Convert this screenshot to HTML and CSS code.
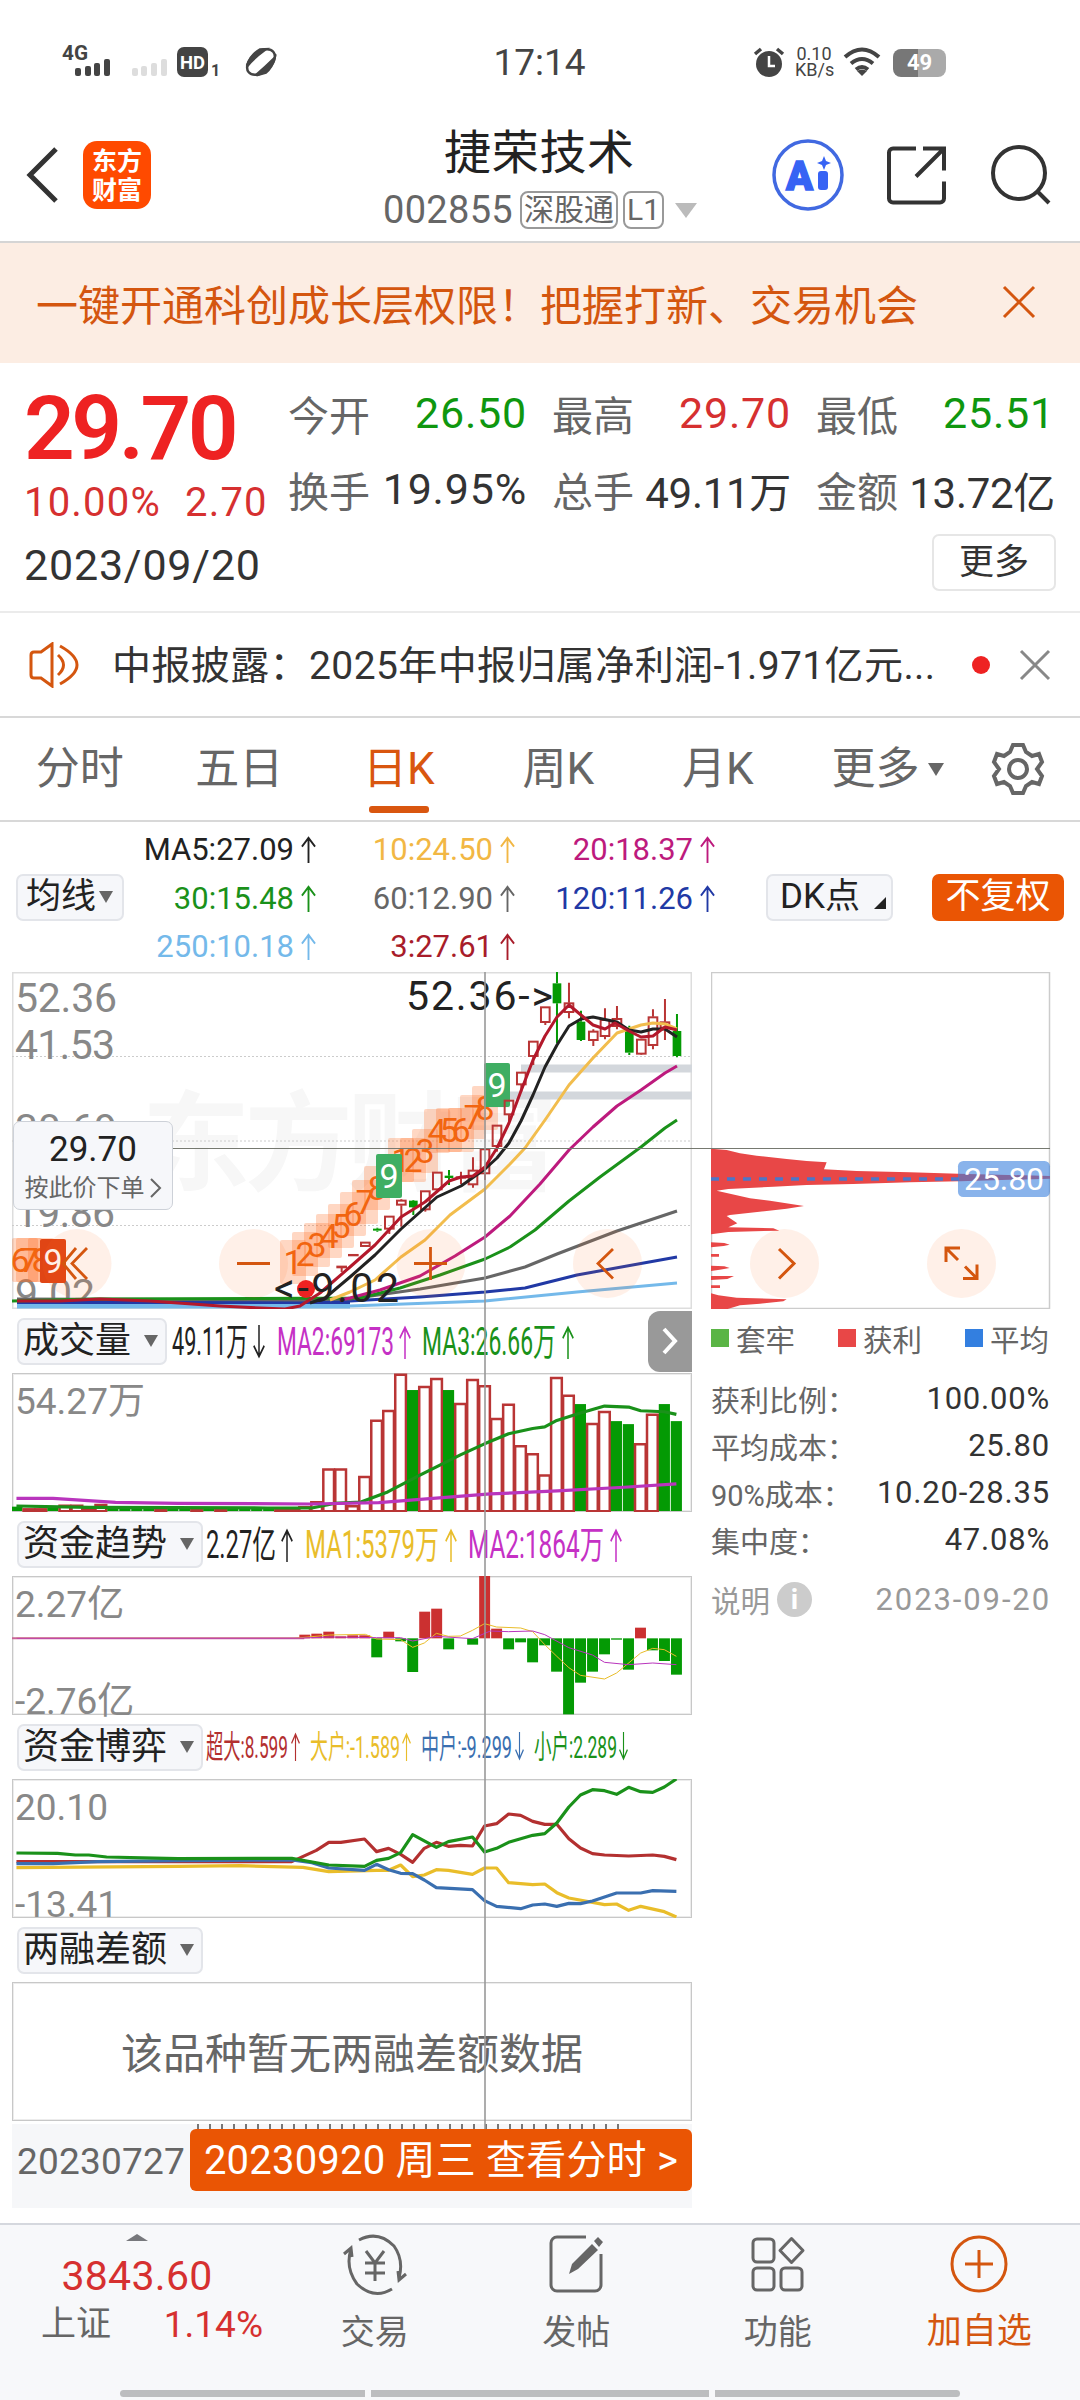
FILE: index.html
```
<!DOCTYPE html>
<html lang="zh-CN">
<head>
	<meta charset="UTF-8">
	<title>捷荣技术 002855</title>
	<link rel="stylesheet" href="styles.css">
</head>
<body>
	<svg width="0" height="0" class="defs">
		<symbol id="up" viewBox="0 0 16 28" preserveAspectRatio="none"><path d="M8 28V2M1 11L8 2l7 9" fill="none" stroke="currentColor" stroke-width="2"/></symbol>
		<symbol id="down" viewBox="0 0 16 28" preserveAspectRatio="none"><path d="M8 0v26M1 17l7 9 7-9" fill="none" stroke="currentColor" stroke-width="2"/></symbol>
	</svg>

	<!-- 状态栏 -->
	<div class="status">
		<div class="st-left">
			<svg width="220" height="40" viewBox="60 42 220 40">
				<text x="62" y="60" font-size="20" font-weight="700" textLength="26" lengthAdjust="spacingAndGlyphs" fill="#444">4G</text>
				<g fill="#444"><rect x="75" y="68" width="6" height="8" rx="2"/><rect x="85" y="66" width="6" height="10" rx="2"/><rect x="94" y="63" width="6" height="13" rx="2"/><rect x="104" y="59" width="6" height="17" rx="2"/></g>
				<g fill="#ddd"><rect x="132" y="68" width="6" height="8" rx="2"/><rect x="141" y="66" width="6" height="10" rx="2"/><rect x="151" y="63" width="6" height="13" rx="2"/><rect x="161" y="59" width="6" height="17" rx="2"/></g>
				<rect x="177" y="47" width="31" height="30" rx="7" fill="#444"/>
				<text x="180" y="69" font-size="18" font-weight="700" textLength="25" lengthAdjust="spacingAndGlyphs" fill="#fff">HD</text>
				<text x="211" y="76" font-size="16" font-weight="700" fill="#444">1</text>
				<g transform="rotate(-40 261 62)"><ellipse cx="261" cy="62" rx="16" ry="10" fill="none" stroke="#444" stroke-width="2.5"/><path d="M248 56Q258 50 268 52L272 55Q258 54 248 56ZM249 69Q262 69 273 68Q266 73 258 73Z" fill="#444" stroke="#444" stroke-width="3"/></g>
			</svg>
		</div>
		<div class="st-time">17:14</div>
		<div class="st-right">
			<svg width="32" height="32" viewBox="753 46 32 32"><circle cx="769" cy="64" r="13" fill="#444"/><path d="M755 54l6-5M783 54l-6-5" stroke="#444" stroke-width="3.5"/><path d="M769 56v10h6" fill="none" stroke="#fff" stroke-width="2.5"/></svg>
			<div class="speed">0.10<br>KB/s</div>
			<svg width="38" height="30" viewBox="0 0 38 30"><g fill="none" stroke="#444" stroke-width="4"><path d="M2 10q17-15 34 0"/><path d="M8 16.500q11-9 22 0"/><path d="M13 22.500q6-5 12 0"/></g><path d="M19 29l-5-5q5-3 10 0z" fill="#444"/></svg>
			<div class="battery">49</div>
		</div>
	</div>

	<!-- 顶部标题 -->
	<div class="header">
		<svg class="back" width="34" height="60" viewBox="0 0 34 60"><path d="M31 4L5 30l26 26" fill="none" stroke="#333" stroke-width="5"/></svg>
		<div class="logo">东方<br>财富</div>
		<div class="title">
			<h1>捷荣技术</h1>
			<div class="code"><span>002855</span><em>深股通</em><em>L1</em><i></i></div>
		</div>
		<svg class="h-icons" width="290" height="76" viewBox="765 137 290 76">
			<circle cx="808" cy="175" r="34" fill="none" stroke="#4169e1" stroke-width="3.500"/>
			<text x="786" y="190" font-size="41" font-weight="900" textLength="27" lengthAdjust="spacingAndGlyphs" fill="#3763f4" stroke="#3763f4" stroke-width="1.500">A</text>
			<rect x="818" y="171" width="10" height="19" rx="3" fill="#3763f4"/>
			<path d="M824 156l2 5 5 2-5 2-2 5-2-5-5-2 5-2z" fill="#3763f4"/>
			<path d="M916 148.500h-23a4 4 0 0 0-4 4v46a4 4 0 0 0 4 4h47a4 4 0 0 0 4-4v-17M923 148.500h21v22M944 148.500l-28 28" fill="none" stroke="#333" stroke-width="4"/>
			<circle cx="1019" cy="173" r="26" fill="none" stroke="#333" stroke-width="4"/>
			<path d="M1037 191l12 12" stroke="#333" stroke-width="4"/>
		</svg>
	</div>

	<div class="banner">
		<span>一键开通科创成长层权限！把握打新、交易机会</span>
		<svg width="34" height="34" viewBox="0 0 34 34"><path d="M2 2l30 30M32 2L2 32" stroke="#d4560f" stroke-width="3"/></svg>
	</div>

	<!-- 行情 -->
	<div class="quote">
		<div class="price">
			<b>29.70</b>
			<p><span>10.00%</span><span>2.70</span></p>
			<div class="date">2023/09/20</div>
		</div>
		<div class="quote-right">
			<ul class="stats">
				<li><label>今开</label><span class="green">26.50</span></li>
				<li><label>最高</label><span class="red">29.70</span></li>
				<li><label>最低</label><span class="green">25.51</span></li>
				<li><label>换手</label><span>19.95%</span></li>
				<li><label>总手</label><span class="cn">49.11万</span></li>
				<li><label>金额</label><span class="cn">13.72亿</span></li>
			</ul>
			<a class="more">更多</a>
		</div>
	</div>

	<div class="notice">
		<svg width="52" height="46" viewBox="0 0 52 46"><g fill="none" stroke="#d4560f" stroke-width="3"><path d="M2 13q0-3 3-3h7L23 2v42L12 36H5q-3 0-3-3z"/><path d="M29 13q11 10 0 20M31 4q34 19 0 38"/></g></svg>
		<span class="txt">中报披露：2025年中报归属净利润-1.971亿元...</span>
		<i class="dot"></i>
		<svg width="32" height="32" viewBox="0 0 32 32"><path d="M2 2l28 28M30 2L2 30" stroke="#888" stroke-width="3"/></svg>
	</div>

	<div class="tabs">
		<a>分时</a><a>五日</a><a class="on">日K</a><a>周K</a><a>月K</a><a class="tab-more">更多<i></i></a>
		<svg width="54" height="54" viewBox="-27 -27 54 54"><g fill="none" stroke="#666" stroke-width="4"><path d="M-5-24H5L8-17L14-13L21-15L24-7L19 0L24 7L21 15L14 13L8 17L5 24H-5L-8 17L-14 13L-21 15L-24 7L-19 0L-24-7L-21-15L-14-13L-8-17Z"/><circle r="9"/></g></svg>
	</div>

	<div class="ma">
		<a class="btn btn-ma">均线<i></i></a>
		<ul>
			<li class="c5">MA5:27.09<svg><use href="#up"/></svg></li>
			<li class="c10">10:24.50<svg><use href="#up"/></svg></li>
			<li class="c20">20:18.37<svg><use href="#up"/></svg></li>
			<li class="c30">30:15.48<svg><use href="#up"/></svg></li>
			<li class="c60">60:12.90<svg><use href="#up"/></svg></li>
			<li class="c120">120:11.26<svg><use href="#up"/></svg></li>
			<li class="c250">250:10.18<svg><use href="#up"/></svg></li>
			<li class="c3">3:27.61<svg><use href="#up"/></svg></li>
		</ul>
		<a class="btn btn-dk">DK点<i></i></a>
		<a class="btn btn-fq">不复权</a>
	</div>

	<div class="charts">
		<div class="col-main">
			<!-- K线 -->
			<svg class="kline" viewBox="12 972 680 337">
				<text x="142" y="1182" font-size="108" font-weight="700" fill="#f7f7f7" textLength="416">东方财富</text>
				<rect x="12.500" y="972.500" width="679" height="336" fill="none" stroke="#ddd" stroke-width="2"/>
				<path d="M12 1056.500H692M12 1141H692M12 1225.500H692" stroke="#ccc" stroke-dasharray="2 2"/>
				<path d="M521 1068.500H692M509 1095.500H692" stroke="#d3d7dc" stroke-width="8"/>
				<g font-size="41" fill="#888">
					<text x="15" y="1012" textLength="102">52.36</text>
					<text x="15" y="1058.500" textLength="100">41.53</text>
					<text x="15" y="1143" textLength="102">30.69</text>
					<text x="15" y="1227" textLength="100">19.86</text>
					<text x="15" y="1308" textLength="80">9.02</text>
				</g>
				<g id="marks"></g>
				<g id="candles" transform="translate(350 960) scale(.3333)"></g>
				<g fill="none" stroke-width="3" stroke-linejoin="round">
					<polyline stroke="#74b9ea" points="350,1306 485,1301 577,1292 677,1283"/>
					<path d="M17 1306H350" stroke="#74b9ea" stroke-width="5"/>
					<path d="M17 1302H350" stroke="#2139a5" stroke-width="4"/>
					<polyline stroke="#2139a5" points="350,1301 420,1297 485,1292 525,1288 577,1275 677,1257"/>
					<polyline stroke="#666" points="17,1299 300,1300 350,1299 420,1289 485,1278 525,1267 557,1254 617,1231 677,1211"/>
					<polyline stroke="#1a911a" points="12,1301 95,1299 360,1298 400,1288 440,1275 485,1259 510,1247 535,1230 569,1201 600,1177 641,1147 665,1128 677,1120"/>
					<polyline stroke="#bd1a7d" points="340,1300 350,1298 380,1290 420,1276 455,1256 485,1237 510,1216 540,1184 569,1150 593,1127 617,1106 641,1090 665,1073 677,1066"/>
					<polyline stroke="#f2bd4d" points="330,1300 350,1292 375,1280 401,1257 425,1240 450,1215 485,1189 510,1164 525,1148 545,1120 569,1085 593,1058 617,1033 641,1025 653,1023 665,1024 677,1029"/>
					<polyline stroke="#222" points="310,1303 325,1298 350,1277 375,1255 401,1229 437,1197 461,1186 485,1169 497,1158 509,1143 521,1121 533,1095 545,1067 557,1045 569,1026 581,1019 593,1017 617,1022 629,1030 641,1032 653,1029 665,1029 677,1037"/>
					<polyline stroke="#b3182b" points="17,1301 60,1301 100,1299 150,1301 220,1306 260,1308 285,1309 300,1306 320,1293 350,1267 375,1245 401,1217 425,1202 449,1181 461,1177 473,1176 485,1167 497,1148 509,1123 521,1091 533,1060 545,1036 557,1017 569,1005 581,1015 593,1025 605,1029 615,1023 629,1031 641,1037 653,1036 665,1027 677,1030"/>
				</g>
				<circle cx="306" cy="1289" r="9" fill="#ee2222"/>
				<g font-size="41" fill="#222">
					<text x="406" y="1010" textLength="147">52.36-&gt;</text>
					<text x="274" y="1302" textLength="125">&lt;-9.02</text>
				</g>
				<g fill="#ff6a20" fill-opacity=".1"><circle cx="77" cy="1263.500" r="34.500"/><circle cx="253.500" cy="1263.500" r="34.500"/><circle cx="431" cy="1263.500" r="34.500"/><circle cx="607.500" cy="1263.500" r="34.500"/></g>
				<path d="M76 1248l-13 15.500 13 15.500M87 1248l-15 15.500 15 15.500M237 1263.500h33M414 1263.500h33M430.500 1247v33M613 1249l-15 14.500 15 15" fill="none" stroke="#d4560f" stroke-width="2.800"/>
			</svg>
			<div class="order"><b>29.70</b><span>按此价下单<svg width="12" height="20" viewBox="0 0 12 20"><path d="M1 1l9 9-9 9" fill="none" stroke="#666" stroke-width="2"/></svg></span></div>

			<!-- 成交量 -->
			<div class="bar">
				<a class="btn btn-s">成交量<i></i></a>
				<svg class="nums" viewBox="167 0 480 64">
					<g font-size="38">
						<text x="172" y="46" textLength="76" fill="#222">49.11万</text><use href="#down" x="253" y="16" width="12" height="34" color="#222"/>
						<text x="277" y="46" textLength="117" fill="#c531c5">MA2:69173</text><use href="#up" x="399" y="16" width="12" height="34" color="#c531c5"/>
						<text x="422" y="46" textLength="134" fill="#1a911a">MA3:26.66万</text><use href="#up" x="562" y="16" width="12" height="34" color="#1a911a"/>
					</g>
				</svg>
				<div class="expand"><svg width="18" height="30" viewBox="0 0 18 30"><path d="M3 3l11 12L3 27" fill="none" stroke="#fff" stroke-width="4"/></svg></div>
			</div>
			<div class="panel">
				<span class="max">54.27万</span>
				<svg viewBox="28 190 1524 416" preserveAspectRatio="none">
					<g id="vol"></g>
					<polyline stroke="#1a911a" stroke-width="3.200" points="38,588 200,592 600,594 700,594 750,580 810,576 870,546 940,497 1033,435 1087,402 1141,372 1195,356 1222,351 1249,332 1302,310 1356,289 1410,292 1437,303 1490,306 1517,314"/>
					<polyline stroke="#b935bd" stroke-width="3.200" points="38,565 120,565 260,577 400,580 700,582 850,578 1000,562 1100,552 1250,543 1400,532 1517,522"/>
				</svg>
			</div>

			<!-- 资金趋势 -->
			<div class="bar">
				<a class="btn">资金趋势<i></i></a>
				<svg class="nums" viewBox="203 0 480 64">
					<g font-size="38">
						<text x="206" y="46" textLength="70" fill="#222">2.27亿</text><use href="#up" x="281" y="16" width="12" height="34" color="#222"/>
						<text x="305" y="46" textLength="134" fill="#e9bd2a">MA1:5379万</text><use href="#up" x="445" y="16" width="12" height="34" color="#e9bd2a"/>
						<text x="468" y="46" textLength="136" fill="#c531c5">MA2:1864万</text><use href="#up" x="610" y="16" width="12" height="34" color="#c531c5"/>
					</g>
				</svg>
			</div>
			<div class="panel">
				<span class="max">2.27亿</span><span class="min">-2.76亿</span>
				<svg viewBox="28 199 1524 417" preserveAspectRatio="none">
					<path d="M28 386H683" stroke="#c86496" stroke-width="2"/>
					<g id="flow"></g>
					<polyline stroke="#e9bd2a" points="38,386 660,386 740,376 820,374 845,388 899,390 926,413 952,400 979,371 1006,380 1033,379 1060,362 1087,342 1114,352 1168,355 1195,366 1222,405 1249,440 1276,474 1302,497 1356,508 1383,490 1437,430 1464,416 1490,420 1517,440"/>
					<polyline stroke="#b935bd" points="38,386 660,386 740,382 845,384 899,384 926,394 979,380 1060,387 1100,364 1141,366 1195,364 1222,375 1276,414 1329,436 1356,458 1410,465 1464,460 1517,465"/>
				</svg>
			</div>

			<!-- 资金博弈 -->
			<div class="bar">
				<a class="btn">资金博弈<i></i></a>
				<svg class="nums" viewBox="203 0 480 64">
					<g font-size="32">
						<text x="206" y="43" textLength="82" fill="#b33030">超大:8.599</text><use href="#up" x="291" y="17" width="9" height="29" color="#b33030"/>
						<text x="310" y="43" textLength="90" fill="#e9bd2a">大户:-1.589</text><use href="#up" x="402" y="17" width="9" height="29" color="#e9bd2a"/>
						<text x="421" y="43" textLength="91" fill="#3a6fb0">中户:-9.299</text><use href="#down" x="515" y="17" width="9" height="29" color="#3a6fb0"/>
						<text x="534" y="43" textLength="83" fill="#1a911a">小户:2.289</text><use href="#down" x="619" y="17" width="9" height="29" color="#1a911a"/>
					</g>
				</svg>
			</div>
			<div class="panel">
				<span class="max">20.10</span><span class="min">-13.41</span>
				<svg viewBox="28 149 1524 417" preserveAspectRatio="none">
					<g stroke-width="3.200">
						<polyline stroke="#b33030" points="38,397 655,397 710,363 738,339 765,339 818,329 845,367 872,357 899,375 926,399 952,357 979,339 1006,351 1033,348 1060,350 1087,290 1114,283 1141,254 1168,258 1195,276 1222,285 1249,285 1276,328 1302,356 1329,373 1356,377 1410,380 1464,377 1490,381 1517,391"/>
						<polyline stroke="#e9bd2a" points="38,415 400,411 540,409 680,414 738,427 845,423 872,423 899,407 926,442 952,437 979,421 1006,423 1060,435 1087,416 1114,416 1141,460 1195,466 1222,464 1249,490 1276,506 1356,526 1383,524 1410,543 1437,531 1490,547 1517,563"/>
						<polyline stroke="#3a6fb0" points="38,403 120,403 220,397 400,394 655,392 700,400 738,416 818,423 845,405 872,421 899,432 926,433 952,452 979,475 1060,481 1087,514 1114,531 1168,538 1195,527 1222,524 1249,531 1276,522 1302,523 1329,515 1383,491 1437,491 1464,484 1517,486"/>
						<polyline stroke="#1a911a" points="38,371 130,372 170,377 200,377 240,383 400,388 655,387 738,407 818,411 845,393 872,387 899,370 926,316 979,354 1006,337 1060,323 1087,368 1114,357 1141,339 1195,318 1222,313 1249,281 1276,233 1302,197 1329,181 1356,184 1383,195 1410,174 1437,187 1464,189 1490,173 1517,149"/>
					</g>
				</svg>
			</div>

			<!-- 两融差额 -->
			<div class="bar"><a class="btn">两融差额<i></i></a></div>
			<div class="panel empty">该品种暂无两融差额数据</div>
			<div class="axis">
				<div class="ticks"></div>
				<span>20230727</span>
				<a>20230920 周三 查看分时 &gt;</a>
			</div>
		</div>

		<!-- 筹码分布 -->
		<div class="col-chip">
			<svg class="chip" viewBox="711 972 340 337">
				<rect x="711.500" y="972.500" width="338" height="336" fill="none" stroke="#ccc" stroke-width="1.500"/>
				<g transform="translate(690 960) scale(.3333)" fill="#e84747">
					<path d="M63 566L110 570L150 580L200 587L290 597L350 603L410 607L402 628L500 633L660 637L805 641L1080 648V656L810 664L660 667L490 672L350 675L250 680L115 687L80 692L180 715L240 722L342 738L290 746L230 753L120 765L110 768L142 790L115 802L250 805L268 812L115 816L63 823Z"/>
					<path d="M63 847l40 2 16 5-18 4-38 4zM63 882h24v8H63zM63 917l40 2 16 5-30 5-26 4zM63 948h69l-20 9-49 3zM63 976h27v8H63zM63 1000L85 1006L140 1013L290 1018L280 1024L210 1031L150 1036L110 1048H63Z"/>
					<path d="M63 657H810" stroke="#4c76c8" stroke-width="10" stroke-dasharray="24 24"/>
					<rect x="804" y="603" width="276" height="108" rx="16" fill="#3a80dd" fill-opacity=".6"/>
				</g>
				<text x="964" y="1190" font-size="32" textLength="80" fill="#fff">25.80</text>
				<g fill="#ff6a20" fill-opacity=".1"><circle cx="784.500" cy="1263.500" r="34.500"/><circle cx="961.500" cy="1263.500" r="34.500"/></g>
				<path d="M779 1249l15 14.500-15 15M946 1262v-14h14M946 1248l12 12M963 1278.500h14v-14M977 1278.500l-12-12" fill="none" stroke="#d4560f" stroke-width="3"/>
			</svg>
			<div class="legend"><span><i class="g"></i>套牢</span><span><i class="r"></i>获利</span><span><i class="b"></i>平均</span></div>
			<dl>
				<dt>获利比例：</dt><dd>100.00%</dd>
				<dt>平均成本：</dt><dd>25.80</dd>
				<dt>90%成本：</dt><dd>10.20-28.35</dd>
				<dt>集中度：</dt><dd>47.08%</dd>
			</dl>
			<div class="explain"><span>说明</span><i>i</i><em>2023-09-20</em></div>
		</div>

		<div class="cross-h"></div>
		<div class="cross-v"></div>
	</div>

	<div class="nav">
		<div class="index">
			<i></i>
			<b>3843.60</b>
			<p><span>上证</span><em>1.14%</em></p>
		</div>
		<a>
			<svg viewBox="0 0 66 64"><g fill="none" stroke="#666" stroke-width="3"><path d="M17 8Q36-2 52 14Q62 28 57 46M50 57Q32 68 15 52Q3 36 9 17M2 22l7-6 1 9M64 42l-7 6-1-9"/><path d="M24 19l9 12 9-12M23 31h20M23 41h20M33 31v18"/></g></svg>
			交易
		</a>
		<a>
			<svg viewBox="0 0 66 64"><path d="M43 5H14a6 6 0 0 0-6 6v42a6 6 0 0 0 6 6h38a6 6 0 0 0 6-6V22" fill="none" stroke="#666" stroke-width="3"/><path d="M26 42l3-10L49 12l6 6L35 37zM51 9l4-4 5 5-4 5z" fill="#666"/></svg>
			发帖
		</a>
		<a>
			<svg viewBox="0 0 66 64"><g fill="none" stroke="#666" stroke-width="3"><rect x="8" y="7" width="21" height="23" rx="4"/><rect x="8" y="36" width="21" height="22" rx="4"/><rect x="36" y="36" width="21" height="22" rx="4"/><path d="M46.500 6.500L58 18.500 46.500 30.500 35 18.500z" stroke-linejoin="round"/></g></svg>
			功能
		</a>
		<a class="add">
			<svg viewBox="0 0 66 64"><g fill="none" stroke="#d4560f" stroke-width="3"><circle cx="33" cy="32" r="27"/><path d="M19 32h28M33 18v28"/></g></svg>
			加自选
		</a>
		<div class="home"><i></i><i></i><i></i></div>
	</div>

	<script src="script.js"></script>
</body>
</html>
```
FILE: styles.css
```
body,ul,li,dl,dt,dd,p,h1{margin:0; padding:0;}
*{box-sizing:border-box;}
body{width:1080px; height:2400px; overflow:hidden; background:#fff; color:#333; font-family:Roboto,"Noto Sans CJK SC",sans-serif;}
ul{list-style:none;}
i,em{font-style:normal;}
svg{display:block; flex:none;}
svg text{white-space:pre;}
.defs{position:absolute;}
.green{color:#0f970f;}
.red{color:#d63030;}

/* 状态栏 */
.status{height:85px; padding:42px 131px 0 60px; display:flex; justify-content:space-between; color:#444;}
.st-left{width:302px;}
.st-time{width:356px; padding-right:36px; text-align:center; font-size:37px; line-height:42px;}
.st-right{display:flex; align-items:flex-start; width:196px; padding-top:4px;}
.speed{width:38px; margin:0 10px; text-align:center; font-size:18px; line-height:16px; white-space:nowrap;}
.battery{width:53px; height:28px; margin:3px 0 0 12px; border-radius:8px; background:linear-gradient(90deg,#777 47%,#aaa 47%); color:#fff; font-size:22px; font-weight:700; line-height:28px; text-align:center;}
.st-right>svg:nth-of-type(2){margin-top:1px;}

/* 标题 */
.header{height:158px; padding:36px 25px 0; display:flex; align-items:flex-start; border-bottom:2px solid #d5d5d5;}
.back{margin-top:24px;}
.logo{width:68px; height:68px; margin:20px 0 0 24px; padding-top:6px; border-radius:14px; background:#ff4a00; color:#fff; font-size:25px; font-weight:700; line-height:29px; text-align:center;}
.title{flex:1; padding-left:177px;}
.title h1{padding:2px 0 0 116px; font-size:47px; font-weight:400; line-height:60px; letter-spacing:.7px; color:#222;}
.code{display:flex; align-items:center; height:40px; margin:7px 0 0 55px;}
.code span{width:137px; font-size:38px; letter-spacing:.3px; color:#666;}
.code em{height:38px; margin-right:5px; padding:0 2px; border:2px solid #999; border-radius:8px; font-size:30px; line-height:34px; color:#666; white-space:nowrap;}
.code i{flex:none; margin-left:6px; border:11px solid transparent; border-top:15px solid #bbb; border-bottom:0;}
.h-icons{margin-top:16px;}

.banner{height:120px; padding:0 44px 2px 36px; display:flex; align-items:center; justify-content:space-between; background:#fcede3; color:#d4560f; font-size:42px;}

/* 行情 */
.quote{height:250px; display:flex; border-bottom:2px solid #ebebeb;}
.price{width:289px; padding-left:24px; color:#d63030;}
.price b{display:block; height:112px; padding-top:14px; font-size:89px; font-weight:600; line-height:104px; letter-spacing:-3.5px; color:#ee2222;}
.price p{display:flex; gap:24px; height:54px; font-size:40px; line-height:56px; letter-spacing:1.2px;}
.price .date{padding-top:11px; color:#333; font-size:43px; line-height:50px; letter-spacing:.8px; white-space:nowrap;}
.stats{display:grid; grid-template-columns:repeat(3,237px); column-gap:27px; height:165px; padding-top:12px;}
.stats li{height:75px; display:flex; justify-content:space-between; align-items:center; font-size:43px; white-space:nowrap; letter-spacing:.8px;}
.stats li span{margin-right:-1px;}
.stats label{margin-left:-1px; font-size:41px; letter-spacing:0; color:#666;}
.stats .cn{font-size:42px; letter-spacing:-.3px;}
.more{display:block; width:124px; height:57px; margin:6px 0 0 643px; border:2px solid #e6e6e6; border-radius:7px; text-align:center; font-size:35px; line-height:54px;}

.notice{height:105px; padding:0 29px; display:flex; align-items:center; border-bottom:2px solid #d8d8d8;}
.notice .txt{width:841px; margin-left:31px; padding-bottom:5px; font-size:39px; letter-spacing:.4px; white-space:nowrap;}
.dot{width:18px; height:18px; margin:0 auto 0 19px; border-radius:9px; background:#ee2222;}

/* 周期 */
.tabs{height:104px; padding-left:-1px; display:flex; align-items:center; border-bottom:2px solid #d8d8d8; color:#666; font-size:44px;}
.tabs a{position:relative; flex:none; width:159.5px; text-align:center; line-height:102px; height:102px;}
.tabs .on{color:#d9560f;}
.tabs .on:after{content:""; position:absolute; left:50px; right:50px; bottom:7px; height:7px; border-radius:3px; background:#d9560f;}
.tabs .tab-more{width:auto; margin-left:34px; display:flex; align-items:center;}
.tab-more i{margin-left:8px; border:8px solid transparent; border-top:13px solid #666; border-bottom:0;}
.tabs svg{margin-left:auto; margin-right:35px;}

.ma{height:150px; padding:0 16px; display:flex; align-items:center;}
.btn{display:flex; align-items:center; height:47px; border:2px solid #e3e5ea; border-radius:7px; background:#f6f7fa; color:#222; font-size:35px; line-height:42px; white-space:nowrap;}
.btn i{border:7px solid transparent; border-top:12px solid #666; border-bottom:0;}
.btn-ma{width:108px; padding-left:8px;}
.btn-ma i{margin-left:3px;}
.ma ul{display:grid; grid-template-columns:192px 199px 200px; grid-auto-rows:48.5px; width:642px; padding-top:2px;}
.ma li{display:flex; align-items:center; justify-content:flex-end; gap:7px; font-size:31px;}
.ma li svg{width:15px; height:27px;}
.c5{color:#222;} .c10{color:#f2b744;} .c20{color:#bd1a7d;} .c30{color:#1a911a;} .c60{color:#666;} .c120{color:#2139a5;} .c250{color:#74b9ea;} .c3{color:#a81c2a;}
.btn-dk{width:127px; padding-left:12px; justify-content:space-between;}
.btn-dk i{align-self:flex-end; margin:0 5px 10px 0; border:6px solid #222; border-top-color:transparent; border-left-color:transparent;}
.btn-fq{width:132px; margin-left:39px; justify-content:center; border:0; background:#ea5504; color:#fff;}

/* 图表 */
.charts{position:relative; height:1252px; padding-left:12px; display:flex; gap:19px;}
.col-main{width:680px; position:relative;}
.kline{width:680px; height:337px;}
.order{position:absolute; left:1px; top:149px; width:160px; height:89px; border:1px solid #cdd1d8; border-radius:7px; background:#f6f7fa; text-align:center;}
.order b{display:block; padding-top:7px; font-size:35px; font-weight:400; line-height:42px; color:#222;}
.order span{display:flex; align-items:center; justify-content:center; gap:5px; font-size:24px; line-height:34px; color:#666;}
.bar{height:64px; display:flex; align-items:center; padding-left:5px;}
.bar .btn{flex:none; width:186px; height:47px; padding:0 7px 0 4px; justify-content:space-between; font-size:36px;}
.bar .btn-s{width:150px;}
.nums{width:480px; height:64px;}
.btn-s+.nums{width:480px; margin-right:-4px;}
.expand{flex:none; width:44px; height:61px; margin-left:auto; display:flex; align-items:center; justify-content:center; border-radius:12px 0 0 12px; background:#999;}
.panel{position:relative; height:139px; border:1px solid #c8c8c8; outline:1px solid #ececec; outline-offset:-2px;}
.panel svg{position:relative; width:680px; height:139px; margin:-1px;}
.panel svg *{vector-effect:non-scaling-stroke;}
.panel polyline{fill:none; stroke-linejoin:round;}
.max,.min{position:absolute; left:2px; color:#888; font-size:37px; line-height:40px; white-space:nowrap;}
.max{top:8px;}
.min{bottom:-8px;}
.empty{display:flex; align-items:center; justify-content:center; padding-bottom:3px; color:#666; font-size:42px;}
.axis{position:relative; height:84px; margin-top:3px; padding-top:5px; display:flex; align-items:flex-start; background:#f6f7f9;}
.axis span{width:178px; padding-left:5px; font-size:37px; line-height:65px; letter-spacing:.2px; color:#666;}
.axis a{width:502px; height:62px; border-radius:6px; background:#ea5504; color:#fff; text-align:center; font-size:40px; line-height:64px; letter-spacing:.2px; white-space:nowrap;}
.ticks{position:absolute; left:185px; top:0; width:424px; height:5px; background:repeating-linear-gradient(90deg,#777 0 2px,transparent 2px 12px);}
.cross-h{position:absolute; left:173px; top:176px; width:877px; height:1px; background:#767970;}
.cross-v{position:absolute; left:484px; top:0; width:2px; height:1157px; background:#999; opacity:.8;}

/* 筹码 */
.col-chip{width:340px; color:#666;}
.chip{width:340px; height:337px;}
.legend{display:flex; justify-content:space-between; height:60px; padding:0 2px 2px 0; align-items:center; font-size:29.5px;}
.legend span{display:flex; align-items:center; gap:7px;}
.legend i{width:18px; height:18px;}
.legend .g{background:#5ab545;} .legend .r{background:#e84747;} .legend .b{background:#337fe0;}
dl{display:grid; grid-template-columns:auto auto; grid-auto-rows:47px; align-items:center; padding:6px 1px 0 0; font-size:29px; white-space:nowrap;}
dd{text-align:right; font-size:31px; letter-spacing:.8px; color:#333;}
.explain{display:flex; align-items:center; height:72px; color:#999; font-size:29.5px;}
.explain i{width:35px; height:35px; margin-left:7px; border-radius:50%; background:#ccc; color:#fff; font-size:28px; font-weight:700; line-height:35px; text-align:center;}
.explain em{margin-left:auto; font-size:31px; letter-spacing:1.9px;}

/* 底部导航 */
.nav{position:relative; height:177px; display:flex; border-top:2px solid #d5d8de; background:#f7f8fa; color:#666; margin-top:-1px;}
.index{width:274px; display:flex; flex-direction:column; align-items:center; color:#d63030;}
.index i{margin-top:9px; border:11px solid transparent; border-bottom:7px solid #77787c; border-top:0;}
.index b{font-size:41px; font-weight:400; line-height:48px; margin-top:11px; letter-spacing:.3px;}
.index p{width:222px; margin:1px 0 0 30px; display:flex; justify-content:space-between; align-items:center; font-size:37px; line-height:48px;}
.index p span{font-size:35px; color:#666;}
.nav a{width:201.5px; padding-top:7px; display:flex; flex-direction:column; align-items:center; font-size:34px; line-height:72px;}
.nav a svg{width:66px; height:64px;}
.nav .add{color:#d4560f; font-size:35px;}
.home{position:absolute; left:120px; bottom:3px; width:840px; display:flex; gap:6px;}
.home i{flex:245; height:7px; background:#bcbdbf;}
.home i:first-child{border-radius:4px 0 0 4px;}
.home i:nth-child(2){flex:338;}
.home i:last-child{border-radius:0 4px 4px 0;}
```
FILE: script.js
```
var NS = "http://www.w3.org/2000/svg";
function el(parent, tag, attrs, text){
	var n = document.createElementNS(NS, tag);
	for(var k in attrs){ n.setAttribute(k, attrs[k]); }
	if(text){ n.textContent = text; }
	parent.appendChild(n);
	return n;
}
var RED = "#b93535", GREEN = "#049a04";

// 九转序列: x, y, 数字
var marks = document.getElementById("marks");
var nine = [
	[12,1238,"6"],[16,1238,"7"],[28,1238,"8"],
	[280,1240,"1"],[292,1232,"2"],[304,1223,"3"],[316,1214,"4"],[328,1204,"5"],[340,1192,"6"],[352,1180,"7"],[364,1166,"8"],
	[388,1138,"1"],[400,1138,"2"],[412,1129,"3"],[424,1109,"4"],[436,1108,"5"],[448,1108,"6"],[460,1095,"7"],[472,1086,"8"]
];
nine.forEach(function(m){
	el(marks, "rect", {x:m[0], y:m[1], width:26, height:44, rx:2, fill:"#ff6a20", "fill-opacity":.27});
});
nine.forEach(function(m){
	el(marks, "text", {x:m[0]+(m[0]==12?8:13), y:m[1]+34, "font-size":34, "text-anchor":"middle", fill:"#f26510"}, m[2]);
});
[[40,1239,"#e04515"],[376,1154,"#3fae63"],[484,1063,"#3fae63"]].forEach(function(m){
	el(marks, "rect", {x:m[0], y:m[1], width:26, height:44, rx:2, fill:m[2]});
	el(marks, "text", {x:m[0]+13, y:m[1]+34, "font-size":34, "text-anchor":"middle", fill:"#fff"}, "9");
});

// 蜡烛: x, 实体上, 实体下, 影线上, 影线下, 涨(1)跌(0)
var candles = [
	[-25,918,924,918,936,1],[10,883,887,883,887,1],[46,846,860,846,860,1],[82,806,812,803,815,0],[118,768,808,768,822,1],
	[154,720,736,718,800,1],[190,722,742,720,765,0],[226,692,750,692,755,1],[262,636,690,636,690,1],
	[297,647,654,630,675,0],[333,650,655,635,672,1],[369,630,675,592,683,1],[405,566,642,566,660,1],
	[441,495,560,495,575,1],[477,420,465,420,485,1],[514,336,375,336,395,1],[550,243,290,243,315,1],
	[586,140,188,140,195,1],[621,70,130,36,250,0],[657,128,158,68,175,1],[693,185,240,152,243,0],
	[730,213,242,208,258,1],[765,178,230,145,238,1],[801,175,200,138,208,1],[838,213,278,197,285,0],
	[874,237,283,237,285,1],[909,170,257,148,268,1],[945,185,205,117,240,1],[981,213,288,162,292,0]
];
var cg = document.getElementById("candles");
candles.forEach(function(c){
	var color = c[5] ? RED : GREEN;
	el(cg, "path", {d:"M"+c[0]+" "+c[3]+"V"+c[1]+"M"+c[0]+" "+c[2]+"V"+c[4], stroke:color, "stroke-width":6});
	if(c[5]){
		el(cg, "rect", {x:c[0]-13, y:c[1]+2, width:26, height:Math.max(c[2]-c[1]-4, 1), fill:"none", stroke:color, "stroke-width":6});
	}else{
		el(cg, "rect", {x:c[0]-13, y:c[1], width:26, height:c[2]-c[1], fill:color});
	}
});

// 成交量
var vol = [575,477,477,587,499,331,302,193,-241,230,206,-241,281,209,228,326,283,407,431,495,203,256,-283,341,305,-334,-343,401,313,-283,-334];
var small = [-590,596,596,-590,585,585,596,583,-592,-592,-592,-592,596,-592,-592,596,-592,596,-592,-592,-592,-592,596,596,590];
var vg = document.getElementById("vol");
small.concat(vol).forEach(function(v, i){
	var x = 1087 + (i-39)*26.87, y = Math.abs(v);
	if(v > 0){
		el(vg, "rect", {x:x-12, y:y+2, width:24, height:602-y, fill:"#fff", stroke:RED, "stroke-width":2.5});
	}else{
		el(vg, "rect", {x:x-12.5, y:y, width:25, height:603-y, fill:GREEN});
	}
});

// 资金趋势
var flow = [375,372,366,380,377,377,443,366,395,487,306,297,419,386,405,199,357,419,398,458,407,486,614,519,486,434,390,480,354,422,454,495];
var fg = document.getElementById("flow");
flow.forEach(function(v, i){
	var x = 1087 + (i-15)*26.87;
	el(fg, "rect", {x:x-12, y:Math.min(v, 386), width:24.5, height:Math.abs(v-386), fill:v<386 ? "#cb3030" : GREEN});
});

// 窄字体数值
var t = document.querySelectorAll(".nums text");
for(var i = 0; i < t.length; i++){
	t[i].setAttribute("lengthAdjust", "spacingAndGlyphs");
}
```
